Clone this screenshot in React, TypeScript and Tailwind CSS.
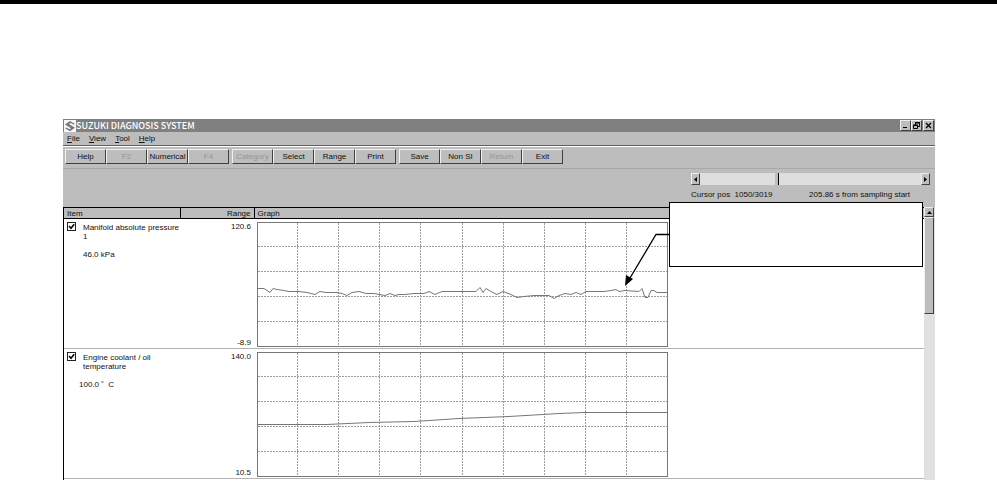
import { useState } from 'react'

interface ToolButton {
  label: string
  disabled?: boolean
}

interface Channel {
  id: string
  label: string
  value: string
  valueClass: string
  max: string
  min: string
  points: string
}

const menus = ['File', 'View', 'Tool', 'Help']

const toolGroups: ToolButton[][] = [
  [{ label: 'Help' }, { label: 'F2', disabled: true }, { label: 'Numerical' }, { label: 'F4', disabled: true }],
  [{ label: 'Category', disabled: true }, { label: 'Select' }, { label: 'Range' }, { label: 'Print' }],
  [{ label: 'Save' }, { label: 'Non SI' }, { label: 'Return', disabled: true }, { label: 'Exit' }],
]

const channels: Channel[] = [
  {
    id: 'map',
    label: 'Manifold absolute pressure 1',
    value: '46.0 kPa',
    valueClass: 'pl-4',
    max: '120.6',
    min: '-8.9',
    points:
      '0,66 7,66 10,68 13,70 16,66 20,67 27,68 32,69 42,69 50,70 58,72 63,69 69,70 75,70 80,70 85,71 90,73 95,70 102,69 109,71 117,71 122,72 128,73 133,71 138,73 142,72 148,72 157,71 167,71 172,69 178,72 185,69 197,69 208,69 219,69 223,65 226,70 229,66 234,69 240,72 246,69 254,72 260,75 267,74 277,73 292,73 297,76 302,73 308,71 314,72 319,70 324,72 329,69 337,69 347,69 354,68 359,67 362,69 368,68 382,69 385,66 388,75 391,75 394,68 397,68 400,70 410,70',
  },
  {
    id: 'ect',
    label: 'Engine coolant / oil temperature',
    value: '100.0 ˚  C',
    valueClass: 'pl-3',
    max: '140.0',
    min: '10.5',
    points: '0,72 70,72 112,70 157,69 202,66 252,64 302,61 327,60 410,60',
  },
]

const columns = [41, 82, 123, 164, 206, 247, 288, 329, 370]
const lines = [25, 50, 75, 100]

const raised = 'border border-t-[#f0f0f0] border-l-[#f0f0f0] border-r-[#404040] border-b-[#404040] bg-[#bdbdbd]'

function Logo() {
  return (
    <svg className="size-3 shrink-0" viewBox="0 0 12 12" aria-hidden="true">
      <rect width="12" height="12" fill="#f8f8f8" />
      <path d="M6 1 1 4.500 7 8.300 5.300 9.300 2.500 7.500 1 8.200 6 11.300 11 7.800 5 3.900 6.700 2.900 9.400 4.600 11 3.900Z" fill="#777" />
    </svg>
  )
}

function Graph({ points, label }: { points: string; label: string }) {
  return (
    <svg className="block h-[125px] w-[411px]" viewBox="0 0 411 125" role="img" aria-label={label} shapeRendering="crispEdges">
      <g stroke="#9c9c9c" strokeDasharray="2 1">
        {columns.map((x) => (
          <line key={x} x1={x - 0.5} x2={x - 0.5} y1="1" y2="124" />
        ))}
        {lines.map((y) => (
          <line key={y} x1="1" x2="410" y1={y - 0.5} y2={y - 0.5} />
        ))}
      </g>
      <rect x="0.5" y="0.5" width="410" height="124" fill="none" stroke="#777" />
      <polyline points={points} transform="translate(0 .5)" fill="none" stroke="#777" shapeRendering="auto" />
    </svg>
  )
}

function ChannelRow({ channel }: { channel: Channel }) {
  const [checked, setChecked] = useState(true)

  return (
    <tr className="h-[130px] border-b border-[#b4b4b4] align-top">
      <td className="pl-[3px]">
        <div className="flex gap-[7px] pt-[3px]">
          <span className="relative size-[9px] shrink-0">
            <input
              id={channel.id}
              type="checkbox"
              checked={checked}
              onChange={(e) => setChecked(e.target.checked)}
              className="block size-[9px] appearance-none border border-[#222] bg-white"
            />
            {checked && (
              <svg className="pointer-events-none absolute inset-0 size-[9px]" viewBox="0 0 9 9" aria-hidden="true">
                <path d="M2 4 4 6.300 7.200 2.200" fill="none" stroke="#000" strokeWidth="1.500" />
              </svg>
            )}
          </span>
          <label htmlFor={channel.id} className="block h-7 w-[98px] pt-px">
            {channel.label}
          </label>
        </div>
        <div className={`whitespace-pre ${channel.valueClass}`}>{channel.value}</div>
      </td>
      <td className="pr-[3px] text-right">
        <div className="flex h-[129px] flex-col justify-between pt-[3px] pb-px">
          <span>{channel.max}</span>
          <span>{channel.min}</span>
        </div>
      </td>
      <td className="pt-[3px] pl-[3px]">
        <Graph points={channel.points} label={channel.label} />
      </td>
    </tr>
  )
}

function CursorPanel() {
  const [pos, setPos] = useState(1050)

  return (
    <div className="flex justify-end border-t border-[#a8a8a8] pt-1 pr-[5px]">
      <div className="w-[239px]">
        <div className="flex h-3">
          <button aria-label="Step back" className={`flex w-[9px] items-center justify-center ${raised}`}>
            <svg className="size-[5px]" viewBox="0 0 5 5"><path d="M4 0v5L1 2.500z" /></svg>
          </button>
          <input
            type="range"
            aria-label="Cursor position"
            min={0}
            max={3019}
            value={pos}
            onChange={(e) => setPos(Number(e.target.value))}
            className="h-3 min-w-0 flex-1 appearance-none bg-[#dedede] [&::-webkit-slider-thumb]:h-3 [&::-webkit-slider-thumb]:w-1 [&::-webkit-slider-thumb]:appearance-none [&::-webkit-slider-thumb]:border-r [&::-webkit-slider-thumb]:border-black [&::-webkit-slider-thumb]:bg-[#bdbdbd]"
          />
          <button aria-label="Step forward" className={`flex w-[9px] items-center justify-center ${raised}`}>
            <svg className="size-[5px]" viewBox="0 0 5 5"><path d="M1 0v5L4 2.500z" /></svg>
          </button>
        </div>
        <div className="flex h-[22px] justify-between pt-[5px] pr-5">
          <span className="whitespace-pre">Cursor pos  1050/3019</span>
          <span>205.86 s from sampling start</span>
        </div>
      </div>
    </div>
  )
}

// Empty note box with an arrow to the pressure trace
function Callout() {
  return (
    <>
      <svg className="pointer-events-none absolute top-[110px] left-[558px] h-[60px] w-[50px]" viewBox="0 0 50 60" aria-hidden="true">
        <path d="M48 5.500H35L9 49" fill="none" stroke="#000" strokeWidth="1.300" />
        <path d="M4 57 5 46 12 50Z" />
      </svg>
      <div className="absolute top-[83px] left-[606px] h-[65px] w-[254px] border border-black bg-white" />
    </>
  )
}

export default function App() {
  return (
    <div className="border-t-4 border-black bg-white px-[62px] pt-[115px] font-['Liberation_Sans',sans-serif] text-[8px] leading-[9px] text-[#111]">
      <main className="relative ml-px bg-[#bdbdbd]">
        <header className="flex h-[13px] items-center bg-[#808080] pl-px">
          <Logo />
          <h1 className="flex-1 font-['Noto_Sans_CJK_JP','Liberation_Sans',sans-serif] text-[9px] font-medium text-white">
            SUZUKI DIAGNOSIS SYSTEM
          </h1>
          <div className="flex pr-px">
            <button aria-label="Minimize" className={`flex h-[11px] w-[11px] items-center justify-center ${raised}`}>
              <svg className="size-[7px]" viewBox="0 0 7 7"><path d="M1 5h4v1H1z" /></svg>
            </button>
            <button aria-label="Restore" className={`flex h-[11px] w-[11px] items-center justify-center ${raised}`}>
              <svg className="size-[7px]" viewBox="0 0 7 7" fill="none" stroke="#000">
                <path d="M2.500 3V.500h4v4H5M2 1h5M.500 3.500h4v3h-4zM0 3h5" />
              </svg>
            </button>
            <button aria-label="Close" className={`ml-px flex h-[11px] w-[11px] items-center justify-center ${raised}`}>
              <svg className="size-[7px]" viewBox="0 0 7 7"><path d="m1 1 5 5m0-5L1 6" stroke="#000" strokeWidth="1.200" /></svg>
            </button>
          </div>
        </header>

        <nav className="flex h-[14px] items-center gap-[9px] border-b border-[#606060] pl-1">
          {menus.map((menu) => (
            <button key={menu}>
              <span className="underline">{menu[0]}</span>
              {menu.slice(1)}
            </button>
          ))}
        </nav>

        <div className="flex h-[22px] gap-[3px] border-t border-white pt-[2px] pl-[2px]">
          {toolGroups.map((group) => (
            <div key={group[0].label} className="flex">
              {group.map((tool) => (
                <button
                  key={tool.label}
                  disabled={tool.disabled}
                  className={`h-[15px] w-[41px] text-center disabled:text-[#969696] ${raised}`}
                >
                  {tool.label}
                </button>
              ))}
            </div>
          ))}
        </div>

        <CursorPanel />

        <div className="flex border-l border-black bg-white">
          <div className="min-w-0 flex-1 pb-px">
            <table className="w-full table-fixed border-collapse">
              <colgroup>
                <col className="w-[116px]" />
                <col className="w-[74px]" />
                <col />
              </colgroup>
              <thead>
                <tr className="h-[11px] border-y border-black bg-[#bdbdbd]">
                  <th className="border-r border-black pl-[3px] text-left font-normal">Item</th>
                  <th className="border-r border-black pr-[3px] text-right font-normal">Range</th>
                  <th className="pl-[3px] text-left font-normal">Graph</th>
                </tr>
              </thead>
              <tbody>
                {channels.map((channel) => (
                  <ChannelRow key={channel.id} channel={channel} />
                ))}
              </tbody>
            </table>
          </div>
          <div className="flex w-[11px] flex-col bg-[#e0e0e0] pr-px">
            <button aria-label="Scroll up" className={`flex h-[10px] items-center justify-center ${raised}`}>
              <svg className="size-[5px]" viewBox="0 0 5 5"><path d="M0 4h5L2.500 1z" /></svg>
            </button>
            <div className={`h-[97px] ${raised}`} />
          </div>
        </div>

        <Callout />
      </main>
    </div>
  )
}
